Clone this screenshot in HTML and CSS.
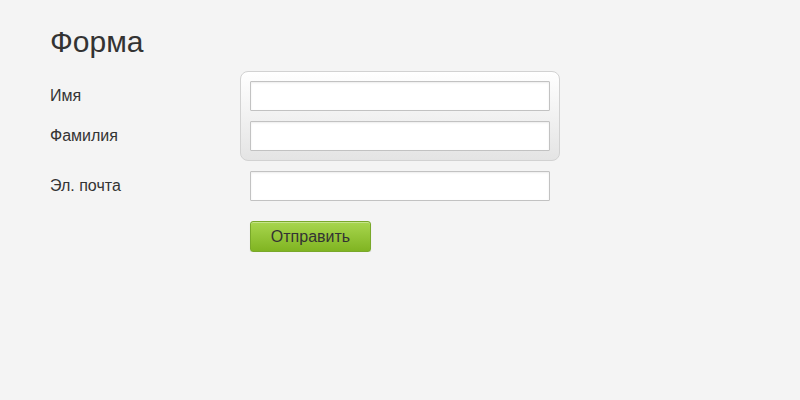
FILE: index.html
```html
<!DOCTYPE html>
<html lang="ru">
<head>
<meta charset="utf-8">
<link rel="stylesheet" href="styles.css">
</head>
<body>
<div class="page">
  <h1 class="title">Форма</h1>
  <form class="form">
    <div class="group-row">
      <div class="labels">
        <label class="label">Имя</label>
        <label class="label">Фамилия</label>
      </div>
      <div class="group">
        <input class="input" type="text">
        <input class="input" type="text">
      </div>
    </div>
    <div class="row">
      <label class="label">Эл. почта</label>
      <input class="input" type="text">
    </div>
    <div class="row">
      <span class="label"></span>
      <button class="btn" type="button">Отправить</button>
    </div>
  </form>
</div>
</body>
</html>
```

FILE: styles.css
```css
html, body {
  margin: 0;
  padding: 0;
  background: #f4f4f4;
  font-family: "Liberation Sans", Arial, sans-serif;
  color: #333;
}
.page {
  padding: 25px 0 0 50px;
}
.title {
  margin: 0;
  font-size: 30px;
  font-weight: normal;
  line-height: 34px;
  color: #333;
}
.form {
  margin-top: 12px;
  display: flex;
  flex-direction: column;
}
.group-row {
  display: flex;
}
.labels {
  width: 190px;
  padding-top: 10px;
  display: flex;
  flex-direction: column;
  gap: 10px;
}
.label {
  width: 200px;
  height: 30px;
  line-height: 30px;
  font-size: 16px;
  color: #333;
  flex-shrink: 0;
}
.labels .label {
  width: 190px;
}
.group {
  display: flex;
  flex-direction: column;
  gap: 10px;
  padding: 9px;
  border: 1px solid #d2d2d2;
  border-radius: 8px;
  background: linear-gradient(#ffffff, #e4e4e4);
  box-shadow: inset 0 1px 0 #fff;
}
.input {
  box-sizing: border-box;
  width: 300px;
  height: 30px;
  margin: 0;
  border: 1px solid #c2c2c2;
  border-radius: 1px;
  background: #fff;
  box-shadow: inset 0 1px 2px rgba(0,0,0,0.08);
  font: 16px "Liberation Sans", Arial, sans-serif;
  padding: 0 6px;
}
.row {
  display: flex;
  align-items: center;
  margin-top: 10px;
}
.row + .row {
  margin-top: 20px;
}
.btn {
  box-sizing: border-box;
  width: 121px;
  height: 31px;
  margin: 0;
  border: 1px solid #79a82a;
  border-radius: 3px;
  background: linear-gradient(#a8d64e, #80b422);
  box-shadow: inset 0 1px 0 rgba(255,255,255,0.35), 0 1px 1px rgba(0,0,0,0.15);
  font: 16px "Liberation Sans", Arial, sans-serif;
  color: #333;
  padding: 0;
}
```
